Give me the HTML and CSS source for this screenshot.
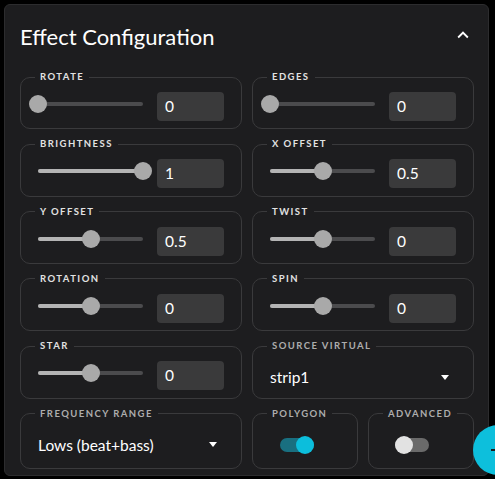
FILE: index.html
```html
<!DOCTYPE html>
<html>
<head>
<meta charset="utf-8">
<link rel="stylesheet" href="styles.css">
</head>
<body>
<div class="card">
  <div class="header">
    <h2 class="title">Effect Configuration</h2>
    <svg class="chev" viewBox="0 0 24 24" width="22" height="22"><path d="M12 8l-6 6 1.41 1.41L12 10.83l4.59 4.58L18 14z" fill="#fff"/></svg>
  </div>
  <div class="grid">
    <fieldset class="fs fs-slider"><legend class="lg lg-light">ROTATE</legend>
      <div class="row"><div class="slider" style="--v:0%"><div class="track"></div><div class="fill"></div><div class="thumb"></div></div><div class="num">0</div></div>
    </fieldset>
    <fieldset class="fs fs-slider"><legend class="lg lg-light">EDGES</legend>
      <div class="row"><div class="slider" style="--v:0%"><div class="track"></div><div class="fill"></div><div class="thumb"></div></div><div class="num">0</div></div>
    </fieldset>
    <fieldset class="fs fs-slider"><legend class="lg lg-light">BRIGHTNESS</legend>
      <div class="row"><div class="slider" style="--v:100%"><div class="track"></div><div class="fill"></div><div class="thumb"></div></div><div class="num">1</div></div>
    </fieldset>
    <fieldset class="fs fs-slider"><legend class="lg lg-light">X OFFSET</legend>
      <div class="row"><div class="slider" style="--v:50%"><div class="track"></div><div class="fill"></div><div class="thumb"></div></div><div class="num">0.5</div></div>
    </fieldset>
    <fieldset class="fs fs-slider"><legend class="lg lg-light">Y OFFSET</legend>
      <div class="row"><div class="slider" style="--v:50%"><div class="track"></div><div class="fill"></div><div class="thumb"></div></div><div class="num">0.5</div></div>
    </fieldset>
    <fieldset class="fs fs-slider"><legend class="lg lg-light">TWIST</legend>
      <div class="row"><div class="slider" style="--v:50%"><div class="track"></div><div class="fill"></div><div class="thumb"></div></div><div class="num">0</div></div>
    </fieldset>
    <fieldset class="fs fs-slider"><legend class="lg lg-light">ROTATION</legend>
      <div class="row"><div class="slider" style="--v:50%"><div class="track"></div><div class="fill"></div><div class="thumb"></div></div><div class="num">0</div></div>
    </fieldset>
    <fieldset class="fs fs-slider"><legend class="lg lg-light">SPIN</legend>
      <div class="row"><div class="slider" style="--v:50%"><div class="track"></div><div class="fill"></div><div class="thumb"></div></div><div class="num">0</div></div>
    </fieldset>
    <fieldset class="fs fs-slider"><legend class="lg lg-light">STAR</legend>
      <div class="row"><div class="slider" style="--v:50%"><div class="track"></div><div class="fill"></div><div class="thumb"></div></div><div class="num">0</div></div>
    </fieldset>
    <fieldset class="fs fs-slider"><legend class="lg">SOURCE VIRTUAL</legend>
      <div class="select"><span>strip1</span><span class="caret"></span></div>
    </fieldset>
    <fieldset class="fs fs-tall"><legend class="lg">FREQUENCY RANGE</legend>
      <div class="select"><span>Lows (beat+bass)</span><span class="caret"></span></div>
    </fieldset>
    <div class="pair">
      <fieldset class="fs fs-tall"><legend class="lg">POLYGON</legend>
        <div class="switch on"><div class="strack"></div><div class="sthumb"></div></div>
      </fieldset>
      <fieldset class="fs fs-tall"><legend class="lg">ADVANCED</legend>
        <div class="switch off"><div class="strack"></div><div class="sthumb"></div></div>
      </fieldset>
    </div>
  </div>
</div>
<div class="fab"><span class="plus"></span></div>
</body>
</html>
```
FILE: styles.css
```css
* { box-sizing: border-box; }
html, body { margin: 0; background: #000; }
body {
  padding: 4px 6px 3px 4px;
  font-family: "Lato", "Open Sans", sans-serif;
  color: #fff;
  overflow: hidden;
  height: 479px;
}
.card {
  width: 485px;
  height: 472px;
  background: #1d1d1f;
  border: 1px solid #2c2c2e;
  border-radius: 6px;
}
.header {
  height: 62px;
  margin-bottom: 4px;
  padding: 0 14px 0 15px;
  display: flex;
  align-items: center;
  justify-content: space-between;
}
.title {
  margin: 0;
  font-size: 22px;
  font-weight: 400;
  letter-spacing: 0;
}
.chev { margin-right: 0; margin-top: -2px; }
.grid {
  padding: 0 14px 0 15px;
  display: grid;
  grid-template-columns: 222px 222px;
  column-gap: 10px;
  row-gap: 9px;
}
.fs {
  margin: 0;
  min-width: 0;
  border: 1px solid #3a3a3c;
  border-radius: 10px;
  padding: 0 17px;
}
.fs-slider { height: 58.33px; padding-top: 9px; }
.fs-tall { height: 61px; }
.lg {
  margin-left: -3px;
  padding: 0 5px;
  font-size: 9.5px;
  line-height: 12px;
  font-weight: 700;
  letter-spacing: 1.45px;
  color: #adadad;
}
.lg-light { color: #e2e2e2; }
.row { display: flex; align-items: flex-start; }
.slider {
  position: relative;
  width: 105px;
  height: 18px;
  margin-top: 3px;
  margin-right: 14px;
}
.track, .fill {
  position: absolute;
  top: 7px;
  left: 0;
  height: 4px;
  border-radius: 2px;
}
.track { right: 0; background: #4b4b4d; }
.fill { width: var(--v); background: #b4b4b4; }
.thumb {
  position: absolute;
  top: 0;
  left: var(--v);
  width: 18px;
  height: 18px;
  margin-left: -9px;
  border-radius: 50%;
  background: #a9a9a9;
}
.num {
  width: 67px;
  height: 29px;
  border-radius: 4px;
  background: #3a3a3b;
  padding-left: 8px;
  font-size: 15.5px;
  line-height: 29px;
  color: #fff;
}
.select {
  display: flex;
  align-items: center;
  justify-content: space-between;
  padding-right: 7px;
  font-size: 15.5px;
  line-height: 20px;
  padding-top: 15px;
}
.fs-slider .select { padding-top: 6px; }
.caret {
  width: 0; height: 0;
  border-left: 4.5px solid transparent;
  border-right: 4.5px solid transparent;
  border-top: 5px solid #fff;
}
.switch {
  position: relative;
  width: 34px;
  height: 18px;
  margin-top: 16px;
  margin-left: 10px;
}
.strack {
  position: absolute;
  left: 0; right: 0; top: 2px;
  height: 14px;
  border-radius: 7px;
}
.sthumb {
  position: absolute;
  top: 0;
  width: 18px;
  height: 18px;
  border-radius: 50%;
}
.on .strack { background: #196f80; }
.on .sthumb { right: 0; background: #0cbedc; }
.off { margin-left: 9px; }
.off .strack { background: #6a6a6a; }
.off .sthumb { left: 0; background: #e2e2e2; }
.pair {
  display: grid;
  grid-template-columns: 106px 106px;
  column-gap: 10px;
}
.fab {
  position: fixed;
  left: 473px;
  top: 424.5px;
  width: 50px;
  height: 50px;
  border-radius: 50%;
  background: #0dbfdc;
}
.plus {
  position: absolute;
  left: 18px;
  top: 24px;
  width: 14px;
  height: 2px;
  background: #1b1b1b;
}
```
